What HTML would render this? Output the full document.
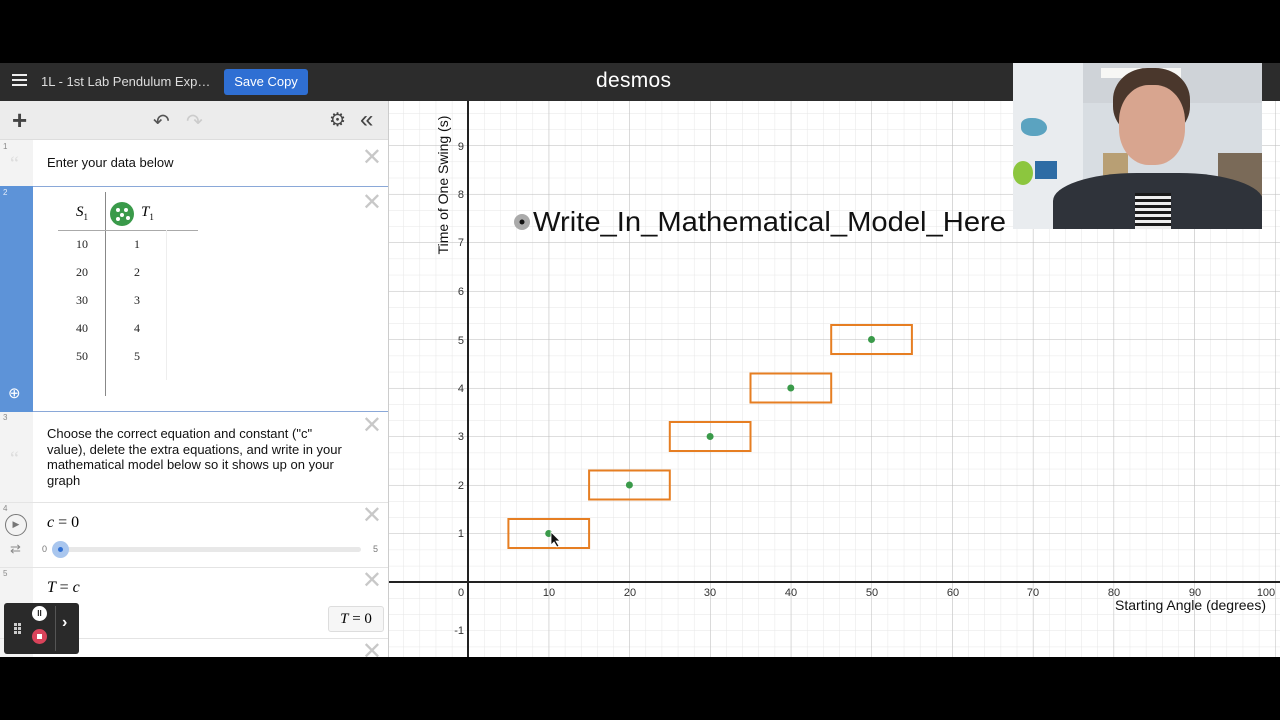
<!DOCTYPE html>
<html><head><meta charset="utf-8"><style>
*{margin:0;padding:0;box-sizing:border-box}
body{width:1280px;height:720px;background:#000;position:relative;overflow:hidden;font-family:"Liberation Sans",sans-serif}
.abs{position:absolute}
.serif{font-family:"Liberation Serif",serif;font-style:italic}
.x{position:absolute;right:6px;color:#c8c8c8;font-size:24px;line-height:20px}
.num{position:absolute;left:3px;font-size:8px;color:#888}
.gut{position:absolute;left:0;width:33px;background:#f3f3f3}
</style></head><body>
<!-- header -->
<div class="abs" style="left:0;top:63px;width:1280px;height:38px;background:#2c2c2c"></div>
<div class="abs" style="left:12px;top:74px;width:15px;height:2px;background:#eee;box-shadow:0 5px 0 #eee,0 10px 0 #eee"></div>
<div class="abs" style="left:41px;top:74px;color:#ddd;font-size:13px">1L - 1st Lab Pendulum Exp…</div>
<div class="abs" style="left:224px;top:69px;width:84px;height:26px;background:#2f6fd3;border-radius:3px;color:#fff;font-size:13px;line-height:26px;text-align:center">Save Copy</div>
<div class="abs" style="left:596px;top:69px;color:#fff;font-size:21px;letter-spacing:0.3px">desmos</div>

<!-- graph -->
<svg class="abs" style="left:389px;top:101px" width="891" height="556" viewBox="389 101 891 556">
<defs>
<pattern id="mi" patternUnits="userSpaceOnUse" x="468" y="582" width="16.14" height="16.17"><path d="M0 0V16.17M0 0H16.14" stroke="#e6e6e6" stroke-width="1" fill="none"/></pattern>
<pattern id="ma" patternUnits="userSpaceOnUse" x="468" y="582" width="80.7" height="48.5"><path d="M0 0V48.5M0 0H80.7" stroke="#bdbdbd" stroke-width="1" fill="none"/></pattern>
</defs>
<rect x="389" y="101" width="891" height="556" fill="#fff"/>
<rect x="389" y="101" width="891" height="556" fill="url(#mi)"/>
<rect x="389" y="101" width="891" height="556" fill="url(#ma)"/>
<line x1="468" y1="101" x2="468" y2="657" stroke="#222" stroke-width="2"/>
<line x1="389" y1="582" x2="1280" y2="582" stroke="#222" stroke-width="2"/>
<g font-family="Liberation Sans" font-size="11" fill="#333" text-anchor="middle">
<text x="461" y="596">0</text><text x="549" y="596">10</text><text x="630" y="596">20</text><text x="710" y="596">30</text><text x="791" y="596">40</text><text x="872" y="596">50</text><text x="953" y="596">60</text><text x="1033" y="596">70</text><text x="1114" y="596">80</text><text x="1195" y="596">90</text><text x="1266" y="596">100</text>
</g>
<g font-family="Liberation Sans" font-size="11" fill="#333" text-anchor="end">
<text x="464" y="150">9</text><text x="464" y="198">8</text><text x="464" y="246">7</text><text x="464" y="295">6</text><text x="464" y="344">5</text><text x="464" y="392">4</text><text x="464" y="440">3</text><text x="464" y="489">2</text><text x="464" y="537">1</text><text x="464" y="634">-1</text>
</g>
<text x="1266" y="610" text-anchor="end" font-family="Liberation Sans" font-size="14" fill="#111">Starting Angle (degrees)</text>
<text transform="translate(448,185) rotate(-90)" text-anchor="middle" font-family="Liberation Sans" font-size="14" fill="#111">Time of One Swing (s)</text>
<circle cx="522" cy="222" r="8" fill="#aaa"/><circle cx="522" cy="222" r="2.5" fill="#111"/>
<text x="533" y="231" font-family="Liberation Sans" font-size="28" fill="#111" textLength="473" lengthAdjust="spacingAndGlyphs">Write_In_Mathematical_Model_Here</text>
<g fill="none" stroke="#e67e22" stroke-width="2">
<rect x="508.4" y="519" width="80.7" height="29"/>
<rect x="589.1" y="470.5" width="80.7" height="29"/>
<rect x="669.8" y="422" width="80.7" height="29"/>
<rect x="750.5" y="373.5" width="80.7" height="29"/>
<rect x="831.2" y="325" width="80.7" height="29"/>
</g>
<g fill="#3a9a4a">
<circle cx="548.7" cy="533.5" r="3.5"/><circle cx="629.4" cy="485" r="3.5"/><circle cx="710.1" cy="436.5" r="3.5"/><circle cx="790.8" cy="388" r="3.5"/><circle cx="871.5" cy="339.5" r="3.5"/>
</g>
<path d="M551 532 L551 545 L554 542 L557 547 L559 546 L556 541 L560 541 Z" fill="#111" stroke="#fff" stroke-width="0.8"/>
</svg>

<!-- left panel -->
<div class="abs" style="left:0;top:101px;width:389px;height:556px;background:#fff;border-right:1px solid #ccc;overflow:hidden">
 <div class="abs" style="left:0;top:0;width:389px;height:39px;background:#ececec;border-bottom:1px solid #ddd"></div>
 <div class="abs" style="left:12px;top:4px;font-size:26px;color:#444;font-weight:bold">+</div>
 <div class="abs" style="left:153px;top:8px;font-size:20px;color:#555">↶</div>
 <div class="abs" style="left:186px;top:8px;font-size:20px;color:#ccc">↷</div>
 <div class="abs" style="left:329px;top:8px;font-size:19px;color:#444">⚙</div>
 <div class="abs" style="left:360px;top:5px;font-size:24px;color:#444">«</div>

 <!-- item1 -->
 <div class="gut" style="top:39px;height:46px"></div><div class="num" style="top:41px">1</div>
 <div class="abs" style="left:10px;top:52px;font-size:20px;color:#ddd;font-family:'Liberation Serif',serif">“</div>
 <div class="abs" style="left:47px;top:54px;font-size:13px;color:#111">Enter your data below</div>
 <div class="x" style="top:47px">✕</div>
 <!-- item2 -->
 <div class="abs" style="left:0;top:85px;width:389px;height:226px;border-top:1px solid #8aa8d8;border-bottom:1px solid #8aa8d8"></div>
 <div class="abs" style="left:0;top:85px;width:33px;height:226px;background:#5d93d8"></div>
 <div class="num" style="top:87px;color:#e6eefa">2</div>
 <div class="abs" style="left:8px;top:283px;color:#fff;font-size:15px">⊕</div>
 <div class="x" style="top:92px">✕</div>
 <div class="abs" style="left:105px;top:91px;width:1px;height:204px;background:#888"></div>
 <div class="abs" style="left:58px;top:129px;width:140px;height:1px;background:#aaa"></div>
 <div class="abs" style="left:166px;top:129px;width:1px;height:150px;background:#eee"></div>
 <div class="abs serif" style="left:76px;top:103px;font-size:15px">S<sub style="font-size:9px;font-style:normal">1</sub></div>
 <div class="abs" style="left:110px;top:101px;width:24px;height:24px;border-radius:50%;background:#3a9a4a"></div>
 <div class="abs" style="left:116px;top:107px;width:4px;height:4px;border-radius:50%;background:#fff;box-shadow:8px 0 0 #fff,4px 5px 0 #fff,10px 8px 0 #fff,0 9px 0 #fff"></div>
 <div class="abs serif" style="left:141px;top:103px;font-size:15px">T<sub style="font-size:9px;font-style:normal">1</sub></div>
 <div class="abs" style="left:76px;top:129px;font-family:'Liberation Serif',serif;font-size:12px;line-height:28px;color:#222">10<br>20<br>30<br>40<br>50</div>
 <div class="abs" style="left:134px;top:129px;font-family:'Liberation Serif',serif;font-size:12px;line-height:28px;color:#222">1<br>2<br>3<br>4<br>5</div>
 <!-- item3 -->
 <div class="gut" style="top:311px;height:90px"></div><div class="num" style="top:312px">3</div>
 <div class="abs" style="left:10px;top:347px;font-size:20px;color:#ddd;font-family:'Liberation Serif',serif">“</div>
 <div class="abs" style="left:47px;top:325px;width:305px;font-size:13px;line-height:15.5px;color:#111">Choose the correct equation and constant ("c" value), delete the extra equations, and write in your mathematical model below so it shows up on your graph</div>
 <div class="x" style="top:315px">✕</div>
 <!-- item4 -->
 <div class="abs" style="left:0;top:401px;width:389px;height:1px;background:#e4e4e4"></div>
 <div class="gut" style="top:402px;height:64px"></div><div class="num" style="top:403px">4</div>
 <div class="abs" style="left:5px;top:413px;width:22px;height:22px;border-radius:50%;border:1.5px solid #777;color:#777;font-size:9px;line-height:19px;text-align:center">▶</div>
 <div class="abs" style="left:10px;top:440px;font-size:13px;color:#888">⇄</div>
 <div class="abs serif" style="left:47px;top:413px;font-size:16px">c <span style="font-style:normal">= 0</span></div>
 <div class="x" style="top:405px">✕</div>
 <div class="abs" style="left:42px;top:443px;font-size:9px;color:#777">0</div>
 <div class="abs" style="left:373px;top:443px;font-size:9px;color:#777">5</div>
 <div class="abs" style="left:56px;top:446px;width:305px;height:5px;border-radius:3px;background:#e8e8e8"></div>
 <div class="abs" style="left:52px;top:440px;width:17px;height:17px;border-radius:50%;background:#a9c6ee"></div>
 <div class="abs" style="left:58px;top:446px;width:5px;height:5px;border-radius:50%;background:#2f6fd3"></div>
 <!-- item5 -->
 <div class="abs" style="left:0;top:466px;width:389px;height:1px;background:#e4e4e4"></div>
 <div class="gut" style="top:467px;height:70px"></div><div class="num" style="top:468px">5</div>
 <div class="abs serif" style="left:47px;top:478px;font-size:16px">T <span style="font-style:normal">=</span> c</div>
 <div class="x" style="top:470px">✕</div>
 <div class="abs" style="left:328px;top:505px;width:56px;height:26px;border:1px solid #ddd;border-radius:3px;background:#f6f6f6;font-family:'Liberation Serif',serif;font-size:15px;line-height:24px;text-align:center"><i>T</i> = 0</div>
 <div class="abs" style="left:0;top:537px;width:389px;height:1px;background:#e4e4e4"></div>
 <div class="gut" style="top:538px;height:30px"></div>
 <div class="x" style="top:541px">✕</div>
</div>

<!-- recorder widget -->
<div class="abs" style="left:4px;top:603px;width:75px;height:51px;background:#2a2a2a;border-radius:3px"></div>
<div class="abs" style="left:14px;top:623px;width:3px;height:3px;background:#ccc;box-shadow:4px 0 0 #ccc,0 4px 0 #ccc,4px 4px 0 #ccc,0 8px 0 #ccc,4px 8px 0 #ccc"></div>
<div class="abs" style="left:32px;top:606px;width:15px;height:15px;border-radius:50%;background:#fff;color:#222;font-size:8px;font-weight:bold;line-height:15px;text-align:center">II</div>
<div class="abs" style="left:32px;top:629px;width:15px;height:15px;border-radius:50%;background:#d9435a"></div>
<div class="abs" style="left:37px;top:634px;width:5px;height:5px;background:#fff"></div>
<div class="abs" style="left:55px;top:606px;width:1px;height:45px;background:#555"></div>
<div class="abs" style="left:62px;top:614px;color:#fff;font-size:16px;font-weight:bold">›</div>

<!-- webcam -->
<div class="abs" style="left:1013px;top:63px;width:249px;height:166px;background:#d8dde2;overflow:hidden">
 <div class="abs" style="left:0;top:0;width:70px;height:166px;background:#e9ecef"></div>
 <div class="abs" style="left:70px;top:0;width:179px;height:40px;background:#cfd3d8"></div>
 <div class="abs" style="left:88px;top:5px;width:80px;height:10px;background:#f7f7f5"></div>
 <div class="abs" style="left:90px;top:90px;width:25px;height:40px;background:#b89f74"></div>
 <div class="abs" style="left:205px;top:90px;width:44px;height:80px;background:#7a6a58"></div>
 <div class="abs" style="left:8px;top:55px;width:26px;height:18px;background:#5ba3c0;border-radius:40% 60% 50% 50%"></div>
 <div class="abs" style="left:0;top:98px;width:20px;height:24px;border-radius:50%;background:#8cc63e"></div>
 <div class="abs" style="left:22px;top:98px;width:22px;height:18px;background:#2e6ca5"></div>
 <div class="abs" style="left:100px;top:5px;width:77px;height:70px;border-radius:45%;background:#4a372c"></div>
 <div class="abs" style="left:106px;top:22px;width:66px;height:80px;border-radius:45%;background:#d8a58f"></div>
 <div class="abs" style="left:40px;top:110px;width:210px;height:70px;border-radius:40% 40% 0 0;background:#2f333a"></div>
 <div class="abs" style="left:122px;top:130px;width:36px;height:40px;background:repeating-linear-gradient(#1a1a1a 0 3px,#eee 3px 6px)"></div>
</div>
</body></html>
